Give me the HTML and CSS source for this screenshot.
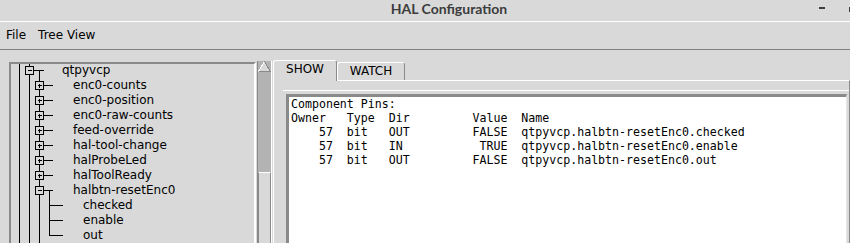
FILE: index.html
```html
<!DOCTYPE html>
<html lang="en">
<head>
    <meta charset="UTF-8">
    <title>HAL Configuration</title>
    <link rel="stylesheet" href="styles.css">
</head>
<body>
    <div class="titlebar">
        <div class="title">HAL Configuration</div>
        <div class="wm-buttons"><span class="wm-min"></span><span class="wm-max"></span></div>
    </div>
    <div class="menubar">
        <span class="menu-item">File</span>
        <span class="menu-item">Tree View</span>
    </div>

    <div class="main">
        <div class="tree-frame">
            <ul class="tree">
                <li>
                    <svg width="51" height="15">
                        <line x1="8.5" y1="0" x2="8.5" y2="15"/><line x1="18.5" y1="0" x2="18.5" y2="15"/>
                        <rect x="14.5" y="3.5" width="8" height="8"/><line x1="16.5" y1="7.5" x2="21" y2="7.5"/>
                        <line x1="23" y1="7.5" x2="33" y2="7.5"/><line x1="28.5" y1="7.5" x2="28.5" y2="15"/>
                    </svg>
                    <span>qtpyvcp</span>
                </li>
                <li><svg width="62" height="15"><use href="#plus-row"/></svg><span>enc0-counts</span></li>
                <li><svg width="62" height="15"><use href="#plus-row"/></svg><span>enc0-position</span></li>
                <li><svg width="62" height="15"><use href="#plus-row"/></svg><span>enc0-raw-counts</span></li>
                <li><svg width="62" height="15"><use href="#plus-row"/></svg><span>feed-override</span></li>
                <li><svg width="62" height="15"><use href="#plus-row"/></svg><span>hal-tool-change</span></li>
                <li><svg width="62" height="15"><use href="#plus-row"/></svg><span>halProbeLed</span></li>
                <li><svg width="62" height="15"><use href="#plus-row"/></svg><span>halToolReady</span></li>
                <li>
                    <svg width="62" height="15">
                        <line x1="8.5" y1="0" x2="8.5" y2="15"/><line x1="18.5" y1="0" x2="18.5" y2="15"/>
                        <line x1="28.5" y1="0" x2="28.5" y2="15"/>
                        <rect x="24.5" y="3.5" width="8" height="8"/><line x1="26.5" y1="7.5" x2="31" y2="7.5"/>
                        <line x1="33" y1="7.5" x2="42" y2="7.5"/><line x1="38.5" y1="7.5" x2="38.5" y2="15"/>
                    </svg>
                    <span>halbtn-resetEnc0</span>
                </li>
                <li><svg width="72" height="15"><use href="#leaf-row"/><line x1="38.5" y1="0" x2="38.5" y2="15"/></svg><span>checked</span></li>
                <li><svg width="72" height="15"><use href="#leaf-row"/><line x1="38.5" y1="0" x2="38.5" y2="15"/></svg><span>enable</span></li>
                <li><svg width="72" height="15"><use href="#leaf-row"/><line x1="38.5" y1="0" x2="38.5" y2="8"/></svg><span>out</span></li>
            </ul>
        </div>

        <div class="scrollbar">
            <svg class="sb-arrow" width="13" height="11">
                <polygon points="6.5,0.5 0.5,10.5 12.5,10.5" fill="#d9d9d9"/>
                <line x1="6.5" y1="0.5" x2="0.5" y2="10.5" stroke="#fff"/>
                <line x1="6.5" y1="0.5" x2="12.5" y2="10.5" stroke="#8a8a8a"/>
                <line x1="0.5" y1="10.5" x2="12.5" y2="10.5" stroke="#8a8a8a"/>
            </svg>
            <div class="sb-trough"></div>
            <div class="sb-slider"></div>
        </div>

        <div class="notebook">
            <div class="tabs">
                <div class="tab tab-show">SHOW</div>
                <div class="tab tab-watch">WATCH</div>
            </div>
            <div class="pane">
                <div class="text-wrap">
<pre class="pins">Component Pins:
Owner   Type  Dir         Value  Name
    57  bit   OUT         FALSE  qtpyvcp.halbtn-resetEnc0.checked
    57  bit   IN           TRUE  qtpyvcp.halbtn-resetEnc0.enable
    57  bit   OUT         FALSE  qtpyvcp.halbtn-resetEnc0.out
</pre>
                </div>
            </div>
        </div>
    </div>

    <!-- shared tree connector pieces -->
    <svg class="defs" width="0" height="0">
        <defs>
            <g id="plus-row">
                <line x1="8.5" y1="0" x2="8.5" y2="15"/><line x1="18.5" y1="0" x2="18.5" y2="15"/>
                <line x1="28.5" y1="0" x2="28.5" y2="15"/>
                <rect x="24.5" y="3.5" width="8" height="8"/>
                <line x1="26.5" y1="7.5" x2="31" y2="7.5"/><line x1="28.5" y1="5.5" x2="28.5" y2="10"/>
                <line x1="33" y1="7.5" x2="42" y2="7.5"/>
            </g>
            <g id="leaf-row">
                <line x1="8.5" y1="0" x2="8.5" y2="15"/><line x1="18.5" y1="0" x2="18.5" y2="15"/>
                <line x1="28.5" y1="0" x2="28.5" y2="15"/>
                <line x1="38.5" y1="7.5" x2="52" y2="7.5"/>
            </g>
        </defs>
    </svg>
</body>
</html>
```

FILE: styles.css
```css
body {
    margin: 0;
    width: 850px;
    height: 243px;
    overflow: hidden;
    background: #d9d9d9;
    font-family: "DejaVu Sans", sans-serif;
    font-size: 12px;
    color: #000;
}
.defs {
    position: absolute;
    width: 0;
    height: 0;
}

/* window title */
.titlebar {
    display: flex;
    height: 21px;
    border-bottom: 1px solid #fff;
}
.title {
    flex: 1;
    padding-left: 81px;
    text-align: center;
    font-family: Lato, "Open Sans", sans-serif;
    font-weight: 700;
    font-size: 14px;
    line-height: 17px;
    color: #3c3c3c;
}
.wm-buttons {
    width: 33px;
    display: flex;
    align-items: flex-start;
    padding-top: 7px;
}
.wm-min {
    flex: none;
    width: 6px;
    height: 2px;
    margin-left: 2px;
    background: #3c3c3c;
}
.wm-max {
    flex: none;
    width: 8px;
    height: 3px;
    margin-left: 24px;
    border: 1px solid #3c3c3c;
}

/* menu */
.menubar {
    display: flex;
    height: 27px;
    line-height: 27px;
    border-bottom: 1px solid #808080;
}
.menu-item {
    padding: 0 6px;
}

.main {
    display: flex;
    height: 193px;
    align-items: flex-start;
}

/* tree */
.tree-frame {
    flex: none;
    width: 247px;
    height: 200px;
    box-sizing: border-box;
    margin: 12px 0 0 9px;
    border: 2px solid;
    border-color: #8a8a8a #fff #fff #8a8a8a;
    overflow: hidden;
}
.tree {
    list-style: none;
    margin: -1px 0 0;
    padding: 0;
}
.tree li {
    display: flex;
    height: 15px;
    line-height: 15px;
    white-space: nowrap;
}
.tree svg {
    flex: none;
    stroke: #000;
    stroke-width: 1;
    fill: none;
    shape-rendering: crispEdges;
}
.tree svg rect,
.defs rect {
    fill: #d9d9d9;
}

/* scrollbar */
.scrollbar {
    flex: none;
    width: 13px;
    height: 200px;
    margin: 11px 0 0 1px;
    border-left: 1px solid #8a8a8a;
    border-right: 1px solid #fff;
    display: flex;
    flex-direction: column;
    background: #b3b3b3;
}
.sb-arrow {
    display: block;
    shape-rendering: crispEdges;
}
.sb-trough {
    height: 100px;
}
.sb-slider {
    flex: 1;
    background: #d9d9d9;
    border-top: 1px solid #fff;
    border-left: 1px solid #8a8a8a;
    border-right: 1px solid #8a8a8a;
}

/* notebook */
.notebook {
    flex: 1;
    margin: 10px 0 0 1px;
    display: flex;
    flex-direction: column;
    height: 200px;
}
.tabs {
    display: flex;
    align-items: flex-end;
    height: 20px;
}
.tab {
    box-sizing: border-box;
    border: 1px solid;
    border-color: #fff #8a8a8a transparent #fff;
    border-bottom: 0;
    border-radius: 3px 3px 0 0;
    background: #d9d9d9;
    text-align: center;
}
.tab-show {
    width: 64px;
    height: 21px;
    line-height: 17px;
    margin-bottom: -1px;
    position: relative;
    z-index: 1;
}
.tab-watch {
    width: 68px;
    height: 18px;
    line-height: 16px;
}
.pane {
    flex: 1;
    border-top: 1px solid #fff;
    border-left: 1px solid #fff;
    border-right: 1px solid #8a8a8a;
}
.text-wrap {
    margin: 9px 0 0 9px;
    padding: 3px 2px 0 3px;
    border-top: 1px solid #fff;
}
.pins {
    margin: 0;
    height: 200px;
    padding: 0 2px;
    background: #fff;
    border-style: solid;
    border-width: 3px 1px 1px 3px;
    border-color: #8a8a8a #e6e6e6 #e6e6e6 #8a8a8a;
    font-family: "DejaVu Sans Mono", monospace;
    font-size: 11.6px;
    line-height: 14px;
    color: #000;
}
```
